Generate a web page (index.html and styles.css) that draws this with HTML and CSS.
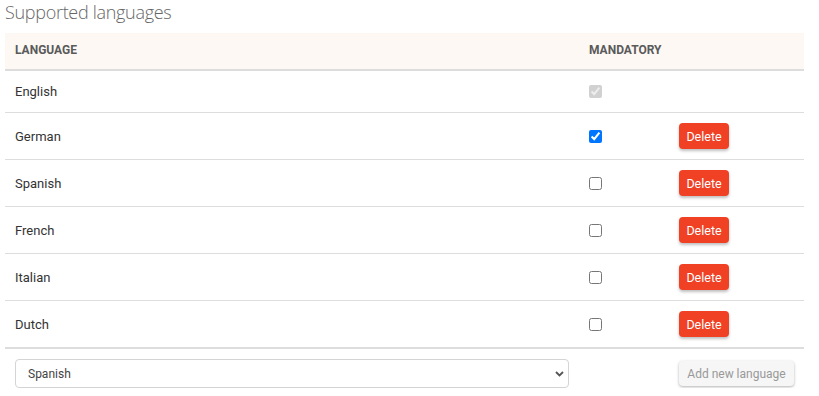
FILE: index.html
```html
<!DOCTYPE html>
<html lang="en">
<head>
  <meta charset="UTF-8" />
  <title>Supported languages</title>
  <link rel="stylesheet" href="styles.css">
</head>
<body>
  <section class="languages">
    <h2 class="languages__title">Supported languages</h2>
    <table class="lang-table">
      <colgroup>
        <col class="col-name">
        <col class="col-mandatory">
        <col class="col-action">
      </colgroup>
      <thead>
        <tr>
          <th>Language</th>
          <th>Mandatory</th>
          <th></th>
        </tr>
      </thead>
      <tbody>
        <tr>
          <td>English</td>
          <td><input type="checkbox" checked disabled></td>
          <td></td>
        </tr>
        <tr>
          <td>German</td>
          <td><input type="checkbox" checked></td>
          <td><button class="btn-delete">Delete</button></td>
        </tr>
        <tr>
          <td>Spanish</td>
          <td><input type="checkbox"></td>
          <td><button class="btn-delete">Delete</button></td>
        </tr>
        <tr>
          <td>French</td>
          <td><input type="checkbox"></td>
          <td><button class="btn-delete">Delete</button></td>
        </tr>
        <tr>
          <td>Italian</td>
          <td><input type="checkbox"></td>
          <td><button class="btn-delete">Delete</button></td>
        </tr>
        <tr>
          <td>Dutch</td>
          <td><input type="checkbox"></td>
          <td><button class="btn-delete">Delete</button></td>
        </tr>
      </tbody>
    </table>
    <div class="add-row">
      <div class="add-row__select">
        <select class="lang-select">
          <option>Spanish</option>
          <option>Portuguese</option>
          <option>Swedish</option>
        </select>
        <svg class="lang-select__arrow" width="9" height="6" viewBox="0 0 9 6"><path d="M1 1 L4.5 4.5 L8 1" fill="none" stroke="#555" stroke-width="1.8"/></svg>
      </div>
      <button class="btn-add" disabled>Add new language</button>
    </div>
  </section>
</body>
</html>
```

FILE: styles.css
```css
html, body { margin: 0; padding: 0; background: #fff; }
body { font-family: Roboto, "Liberation Sans", sans-serif; color: #333; }

.languages { width: 799px; padding: 0 0 0 5px; }

.languages__title {
  margin: 0;
  height: 33px;
  font-family: "Open Sans", sans-serif;
  font-weight: 300;
  font-size: 18px;
  line-height: 25px;
  color: #666;
  letter-spacing: -.3px;
}

/* ── table ── */
.lang-table {
  width: 100%;
  table-layout: fixed;
  border-collapse: collapse;
  font-size: 13px;
}
.col-name { width: 574px; }
.col-mandatory { width: 90px; }
.lang-table th {
  background: #fdf8f4;
  text-align: left;
  text-transform: uppercase;
  font-size: 12px;
  font-weight: 700;
  color: #5a5a5a;
  line-height: 13px;
  padding: 11px 10px 12px;
  border-bottom: 2px solid #dddddd;
}
.lang-table td {
  padding: 10px 10px;
  line-height: 21px;
  border-bottom: 1px solid #dddddd;
  vertical-align: middle;
}
.lang-table tbody tr:last-child td { border-bottom: 2px solid #dddddd; }
.lang-table td input[type="checkbox"] {
  margin: 0;
  width: 13px; height: 13px;
  vertical-align: middle;
  position: relative; top: -1px;
}

.btn-delete {
  height: 26px;
  width: 50px;
  padding: 0;
  border: none;
  border-radius: 4px;
  background: #f04124;
  color: #fff;
  font-family: Roboto, sans-serif;
  font-size: 12.5px;
  box-shadow: 0 2px 3px rgba(0,0,0,0.25);
  display: block;
}

/* ── add row ── */
.add-row {
  display: flex;
  align-items: center;
  padding: 10px 10px 0 10px;
}
.add-row__select { position: relative; width: 554px; }
.lang-select {
  appearance: none;
  -webkit-appearance: none;
  width: 100%;
  height: 29px;
  border: 1px solid #d4d4d4;
  border-radius: 4px;
  background: #fff;
  padding: 0 12px;
  font-family: Roboto, sans-serif;
  font-size: 12px;
  color: #444;
}
.lang-select__arrow {
  position: absolute;
  right: 5px; top: 12px;
  pointer-events: none;
}
.btn-add {
  margin-left: 110px;
  height: 25px;
  width: 115px;
  padding: 0;
  border: none;
  border-radius: 4px;
  background: #f6f6f6;
  color: #999;
  font-family: Roboto, sans-serif;
  font-size: 12px;
  box-shadow: 0 1px 3px rgba(0,0,0,0.3);
}
```
